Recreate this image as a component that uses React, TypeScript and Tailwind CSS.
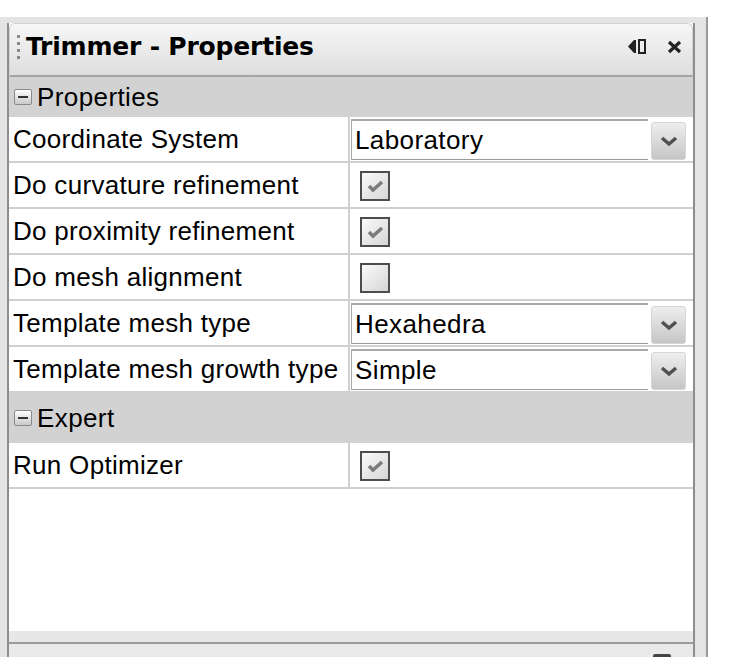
import React from 'react';

type Row =
  | { kind: 'group'; label: string }
  | { kind: 'combo'; label: string; value: string }
  | { kind: 'check'; label: string; checked: boolean };

const rows: Row[] = [
  { kind: 'group', label: 'Properties' },
  { kind: 'combo', label: 'Coordinate System', value: 'Laboratory' },
  { kind: 'check', label: 'Do curvature refinement', checked: true },
  { kind: 'check', label: 'Do proximity refinement', checked: true },
  { kind: 'check', label: 'Do mesh alignment', checked: false },
  { kind: 'combo', label: 'Template mesh type', value: 'Hexahedra' },
  { kind: 'combo', label: 'Template mesh growth type', value: 'Simple' },
  { kind: 'group', label: 'Expert' },
  { kind: 'check', label: 'Run Optimizer', checked: true },
];

const Minus = () => (
  <div className="w-[18px] h-[16px] rounded-[2px] border border-[#8a8a8a] bg-gradient-to-b from-white to-[#c9c9c9] flex items-center justify-center">
    <div className="w-[10px] h-[2px] bg-[#333]" />
  </div>
);

const CheckBox = ({ checked }: { checked: boolean }) => (
  <div className="w-[30px] h-[30px] border-2 border-[#4d4d4d] bg-gradient-to-br from-[#fafafa] to-[#d6d6d6] flex items-center justify-center">
    {checked && (
      <svg width="17" height="14" viewBox="0 0 17 14">
        <polyline points="2,7 6,11 15,3" fill="none" stroke="#7c7c7c" strokeWidth="3.5" />
      </svg>
    )}
  </div>
);

const Combo = ({ value }: { value: string }) => (
  <div className="flex h-full pt-[2px] pb-[1px]">
    <div className="ml-[1px] w-[297px] bg-white border-t-2 border-[#6a6a6a] border-l border-[#a8a8a8] border-b border-b-[#9a9a9a] pl-[3px] flex items-center text-[26px] tracking-[0.4px] text-black">
      {value}
    </div>
    <div className="ml-[3px] mt-[3px] w-[35px] rounded-[3px] bg-gradient-to-b from-[#eeeeee] to-[#c6c6c6] border border-[#d6d6d6] flex items-center justify-center">
      <svg width="18" height="11" viewBox="0 0 18 11">
        <polyline points="2,2 9,8 16,2" fill="none" stroke="#505050" strokeWidth="3.5" />
      </svg>
    </div>
  </div>
);

export default function App() {
  return (
    <div className="w-[731px] h-[670px] bg-white pt-[17px] font-['Liberation_Sans',Arial,sans-serif] text-black">
      <div className="w-[708px] h-[640px] bg-[#e4e4e4] pt-[6px] pl-[7px] pr-[11px] border-r-2 border-[#9a9a9a] flex flex-col">
        <div className="flex-1 flex flex-col border-l-2 border-r-2 border-[#8e8e8e] bg-white">
          {/* title bar */}
          <div className="h-[54px] flex items-center rounded-t-[6px] border border-[#d2d2d2] border-b-2 border-b-[#a4a4a4] bg-gradient-to-b from-[#f7f7f7] to-[#dedede] pl-[7px] pr-[10px] pb-[6px]">
            <div className="flex flex-col gap-[4px] mr-[6px]">
              <div className="w-[3px] h-[3px] bg-[#8a8a8a]" />
              <div className="w-[3px] h-[3px] bg-[#8a8a8a]" />
              <div className="w-[3px] h-[3px] bg-[#8a8a8a]" />
              <div className="w-[3px] h-[3px] bg-[#8a8a8a]" />
            </div>
            <span className="font-['DejaVu_Sans',sans-serif] font-bold text-[25px] tracking-[-0.2px]">
              Trimmer - Properties
            </span>
            <div className="ml-auto flex items-center gap-[20px]">
              <svg width="19" height="15" viewBox="0 0 19 15">
                <path d="M0 7.5 L6 1 L8 1 L8 14 L6 14 Z" fill="#222" />
                <rect x="11" y="1" width="6" height="13" fill="none" stroke="#222" strokeWidth="2" />
              </svg>
              <svg width="15" height="14" viewBox="0 0 15 14">
                <path d="M2 2 L13 12 M13 2 L2 12" stroke="#222" strokeWidth="3.2" />
              </svg>
            </div>
          </div>

          {rows.map((row, i) =>
            row.kind === 'group' ? (
              <div
                key={i}
                className={`${row.label === 'Expert' ? 'h-[50px]' : 'h-[40px]'} bg-[#d2d2d2] flex items-center pl-[5px] gap-[5px] text-[26px] tracking-[0.4px]`}
              >
                <Minus />
                <span>{row.label}</span>
              </div>
            ) : (
              <div key={i} className="h-[46px] flex border-b-2 border-[#d0d0d0]">
                <div className="w-[341px] shrink-0 border-r-2 border-[#d0d0d0] pl-[4px] flex items-center text-[26px] tracking-[0.3px] whitespace-nowrap">
                  {row.label}
                </div>
                <div className="flex-1">
                  {row.kind === 'combo' ? (
                    <Combo value={row.value} />
                  ) : (
                    <div className="pl-[10px] pt-[8px]">
                      <CheckBox checked={row.checked} />
                    </div>
                  )}
                </div>
              </div>
            )
          )}

          <div className="flex-1" />
          <div className="h-[11px] bg-[#e7e7e7]" />
          <div className="h-[2px] bg-[#9c9c9c]" />
          <div className="h-[13px] bg-[#e9e9e9] flex items-end justify-end pr-[22px]">
            <div className="w-[18px] h-[3px] rounded-t-[2px] bg-[#444]" />
          </div>
        </div>
      </div>
    </div>
  );
}
